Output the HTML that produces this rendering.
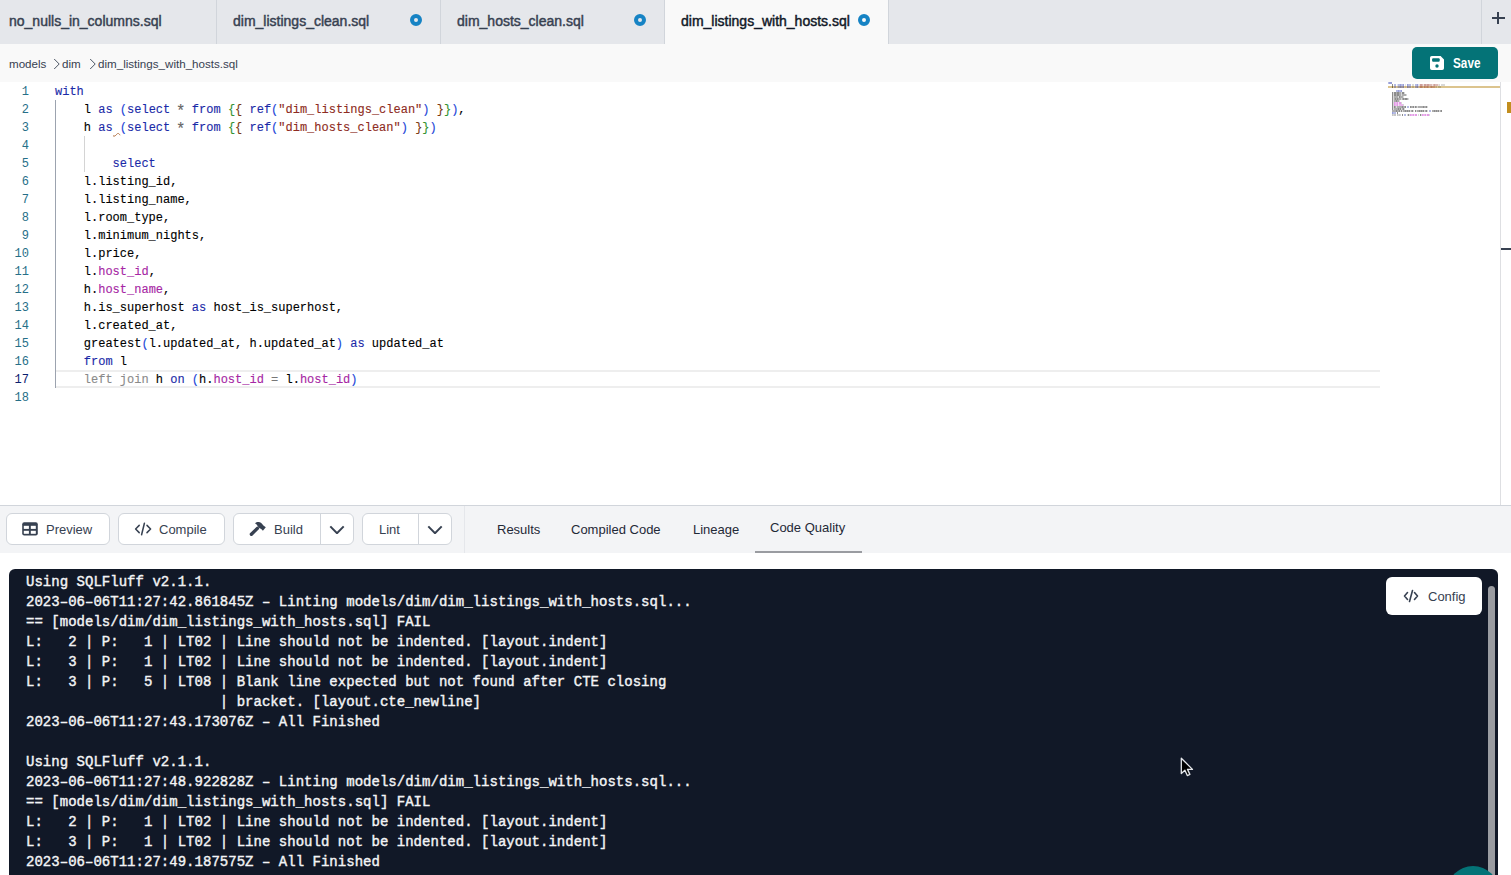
<!DOCTYPE html>
<html><head><meta charset="utf-8">
<style>
*{box-sizing:border-box;margin:0;padding:0}
html,body{width:1511px;height:875px;overflow:hidden;background:#fff;font-family:"Liberation Sans",sans-serif;color:#374151}
.abs{position:absolute}
#tabs{position:absolute;left:0;top:0;width:1511px;height:44px;background:#e5e7eb}
.tab{position:absolute;top:0;height:44px;border-right:1px solid #d1d5db}
.tab .t{position:absolute;top:13px;font-size:14px;line-height:16px;white-space:nowrap;color:#374151;-webkit-text-stroke:0.45px currentColor}
.dot{position:absolute;top:14px;width:12px;height:12px;border-radius:50%;border:4px solid #1683c4;background:#e5e7eb}
#crumb{position:absolute;left:0;top:44px;width:1511px;height:38px;background:#f9f9f9}
#crumb span{position:absolute;top:13px;font-size:11.6px;line-height:14px;color:#374151;white-space:nowrap}
#save{position:absolute;left:1412px;top:3px;width:86px;height:32px;background:#047377;border-radius:5px;color:#fff}
#editor{position:absolute;left:0;top:82px;width:1511px;height:423px;background:#fff}
.ln{position:absolute;left:0;width:29px;padding-top:1px;text-align:right;font-family:"Liberation Mono",monospace;font-size:12px;line-height:18px;height:18px;color:#266f88}
.cl{position:absolute;left:55px;padding-top:1px;font-family:"Liberation Mono",monospace;font-size:12px;line-height:18px;height:18px;white-space:pre;color:#000;-webkit-text-stroke:0.12px currentColor}
.k{color:#1a2aa8}
.s{color:#8e2b22}
.p{color:#a626a4}
.b1{color:#2246d8}
.b2{color:#319331}
.b3{color:#7b3814}
.op{color:#777}
.ast{display:inline-block;transform:translateY(2.5px) scale(1.3);color:#666}
.g{color:#8a8a8a}
.ln.cur{color:#0b216f}
#toolbar{position:absolute;left:0;top:505px;width:1511px;height:48px;background:#f3f4f6}
.bt{position:absolute;top:17px;font-size:13px;line-height:15px;color:#374151;white-space:nowrap}
.btn{position:absolute;top:8px;height:32px;background:#fff;border:1px solid #d1d5db;border-radius:6px}
.btn .t{position:absolute;top:8px;font-size:14px;line-height:16px;color:#374151;white-space:nowrap}
.rtab{position:absolute;top:17px;font-size:13px;line-height:15px;color:#1f2937;white-space:nowrap}
#console{position:absolute;left:9px;top:569px;width:1489px;height:320px;background:#111827;border-radius:6px}
.cons{position:absolute;left:17px;letter-spacing:0.025px;font-family:"Liberation Mono",monospace;font-weight:normal;-webkit-text-stroke:0.4px currentColor;font-size:14px;line-height:20px;white-space:pre;color:#f3f4f6}
#config{position:absolute;left:1377px;top:8px;width:96px;height:38px;background:#fff;border-radius:6px}
</style></head>
<body>
<div id="tabs">
  <div class="tab" style="left:0;width:217px"><span class="t" style="left:9px">no_nulls_in_columns.sql</span></div>
  <div class="tab" style="left:217px;width:224px"><span class="t" style="left:16px">dim_listings_clean.sql</span><div class="dot" style="left:193px"></div></div>
  <div class="tab" style="left:441px;width:224px"><span class="t" style="left:16px">dim_hosts_clean.sql</span><div class="dot" style="left:193px"></div></div>
  <div class="tab" style="left:665px;width:224px;background:#f9f9f9"><span class="t" style="left:16px;color:#111827">dim_listings_with_hosts.sql</span><div class="dot" style="left:193px;background:#f9f9f9"></div></div>
  <div class="abs" style="left:1481px;top:0;width:1px;height:44px;background:#d1d5db"></div>
  <div class="abs" style="left:1492px;top:17px;width:13px;height:2px;background:#374151"></div>
  <div class="abs" style="left:1497px;top:12px;width:2px;height:12px;background:#374151"></div>
</div>
<div id="crumb">
  <span style="left:9px">models</span>
  <svg class="abs" style="left:53px;top:14px" width="8" height="12" viewBox="0 0 8 12"><path d="M1.2 1L6.2 6 1.2 11" fill="none" stroke="#4b5563" stroke-width="1"/></svg>
  <span style="left:62px">dim</span>
  <svg class="abs" style="left:89px;top:14px" width="8" height="12" viewBox="0 0 8 12"><path d="M1.2 1L6.2 6 1.2 11" fill="none" stroke="#4b5563" stroke-width="1"/></svg>
  <span style="left:98px">dim_listings_with_hosts.sql</span>
  <div id="save">
    <svg class="abs" style="left:18px;top:9px" width="14" height="14" viewBox="0 0 14 14"><path d="M1.8 0H10.6L14 3.4V12.2A1.8 1.8 0 0 1 12.2 14H1.8A1.8 1.8 0 0 1 0 12.2V1.8A1.8 1.8 0 0 1 1.8 0Z" fill="#fff"/><rect x="2.1" y="2.3" width="7.6" height="3.5" rx="1" fill="#047377"/><circle cx="7" cy="10" r="1.7" fill="#047377"/></svg>
    <span class="abs" style="left:41px;top:8px;font-size:14px;line-height:16px;font-weight:bold;color:#fff;transform:scaleX(0.84);transform-origin:0 0">Save</span>
  </div>
</div>
<div id="editor">
<svg class="abs" style="left:1388px;top:0px" width="112" height="40" viewBox="0 0 112 40" shape-rendering="crispEdges"><rect x="0" y="4" width="112" height="2" fill="#dcc48e"/><rect x="0" y="0" width="1" height="2" fill="#1a2aa8" fill-opacity="0.32"/><rect x="1" y="0" width="1" height="2" fill="#1a2aa8" fill-opacity="0.45"/><rect x="2" y="0" width="1" height="2" fill="#1a2aa8" fill-opacity="0.45"/><rect x="3" y="0" width="1" height="2" fill="#1a2aa8" fill-opacity="0.45"/><rect x="4" y="2" width="1" height="2" fill="#000" fill-opacity="0.45"/><rect x="6" y="2" width="1" height="2" fill="#1a2aa8" fill-opacity="0.32"/><rect x="7" y="2" width="1" height="2" fill="#1a2aa8" fill-opacity="0.32"/><rect x="9" y="2" width="1" height="2" fill="#2246d8" fill-opacity="0.15"/><rect x="10" y="2" width="1" height="2" fill="#1a2aa8" fill-opacity="0.32"/><rect x="11" y="2" width="1" height="2" fill="#1a2aa8" fill-opacity="0.32"/><rect x="12" y="2" width="1" height="2" fill="#1a2aa8" fill-opacity="0.45"/><rect x="13" y="2" width="1" height="2" fill="#1a2aa8" fill-opacity="0.32"/><rect x="14" y="2" width="1" height="2" fill="#1a2aa8" fill-opacity="0.32"/><rect x="15" y="2" width="1" height="2" fill="#1a2aa8" fill-opacity="0.45"/><rect x="17" y="2" width="1" height="2" fill="#555" fill-opacity="0.15"/><rect x="19" y="2" width="1" height="2" fill="#1a2aa8" fill-opacity="0.45"/><rect x="20" y="2" width="1" height="2" fill="#1a2aa8" fill-opacity="0.32"/><rect x="21" y="2" width="1" height="2" fill="#1a2aa8" fill-opacity="0.32"/><rect x="22" y="2" width="1" height="2" fill="#1a2aa8" fill-opacity="0.32"/><rect x="24" y="2" width="1" height="2" fill="#000" fill-opacity="0.15"/><rect x="25" y="2" width="1" height="2" fill="#000" fill-opacity="0.15"/><rect x="27" y="2" width="1" height="2" fill="#1a2aa8" fill-opacity="0.32"/><rect x="28" y="2" width="1" height="2" fill="#1a2aa8" fill-opacity="0.32"/><rect x="29" y="2" width="1" height="2" fill="#1a2aa8" fill-opacity="0.45"/><rect x="30" y="2" width="1" height="2" fill="#2246d8" fill-opacity="0.15"/><rect x="31" y="2" width="1" height="2" fill="#8e2b22" fill-opacity="0.15"/><rect x="32" y="2" width="1" height="2" fill="#8e2b22" fill-opacity="0.45"/><rect x="33" y="2" width="1" height="2" fill="#8e2b22" fill-opacity="0.45"/><rect x="34" y="2" width="1" height="2" fill="#8e2b22" fill-opacity="0.32"/><rect x="35" y="2" width="1" height="2" fill="#8e2b22" fill-opacity="0.15"/><rect x="36" y="2" width="1" height="2" fill="#8e2b22" fill-opacity="0.45"/><rect x="37" y="2" width="1" height="2" fill="#8e2b22" fill-opacity="0.45"/><rect x="38" y="2" width="1" height="2" fill="#8e2b22" fill-opacity="0.32"/><rect x="39" y="2" width="1" height="2" fill="#8e2b22" fill-opacity="0.45"/><rect x="40" y="2" width="1" height="2" fill="#8e2b22" fill-opacity="0.45"/><rect x="41" y="2" width="1" height="2" fill="#8e2b22" fill-opacity="0.32"/><rect x="42" y="2" width="1" height="2" fill="#8e2b22" fill-opacity="0.32"/><rect x="43" y="2" width="1" height="2" fill="#8e2b22" fill-opacity="0.32"/><rect x="44" y="2" width="1" height="2" fill="#8e2b22" fill-opacity="0.15"/><rect x="45" y="2" width="1" height="2" fill="#8e2b22" fill-opacity="0.32"/><rect x="46" y="2" width="1" height="2" fill="#8e2b22" fill-opacity="0.45"/><rect x="47" y="2" width="1" height="2" fill="#8e2b22" fill-opacity="0.32"/><rect x="48" y="2" width="1" height="2" fill="#8e2b22" fill-opacity="0.32"/><rect x="49" y="2" width="1" height="2" fill="#8e2b22" fill-opacity="0.32"/><rect x="50" y="2" width="1" height="2" fill="#8e2b22" fill-opacity="0.15"/><rect x="51" y="2" width="1" height="2" fill="#000" fill-opacity="0.15"/><rect x="53" y="2" width="1" height="2" fill="#000" fill-opacity="0.15"/><rect x="54" y="2" width="1" height="2" fill="#000" fill-opacity="0.15"/><rect x="55" y="2" width="1" height="2" fill="#000" fill-opacity="0.15"/><rect x="56" y="2" width="1" height="2" fill="#000" fill-opacity="0.15"/><rect x="4" y="4" width="1" height="2" fill="#000" fill-opacity="0.45"/><rect x="6" y="4" width="1" height="2" fill="#1a2aa8" fill-opacity="0.32"/><rect x="7" y="4" width="1" height="2" fill="#1a2aa8" fill-opacity="0.32"/><rect x="9" y="4" width="1" height="2" fill="#2246d8" fill-opacity="0.15"/><rect x="10" y="4" width="1" height="2" fill="#1a2aa8" fill-opacity="0.32"/><rect x="11" y="4" width="1" height="2" fill="#1a2aa8" fill-opacity="0.32"/><rect x="12" y="4" width="1" height="2" fill="#1a2aa8" fill-opacity="0.45"/><rect x="13" y="4" width="1" height="2" fill="#1a2aa8" fill-opacity="0.32"/><rect x="14" y="4" width="1" height="2" fill="#1a2aa8" fill-opacity="0.32"/><rect x="15" y="4" width="1" height="2" fill="#1a2aa8" fill-opacity="0.45"/><rect x="17" y="4" width="1" height="2" fill="#555" fill-opacity="0.15"/><rect x="19" y="4" width="1" height="2" fill="#1a2aa8" fill-opacity="0.45"/><rect x="20" y="4" width="1" height="2" fill="#1a2aa8" fill-opacity="0.32"/><rect x="21" y="4" width="1" height="2" fill="#1a2aa8" fill-opacity="0.32"/><rect x="22" y="4" width="1" height="2" fill="#1a2aa8" fill-opacity="0.32"/><rect x="24" y="4" width="1" height="2" fill="#000" fill-opacity="0.15"/><rect x="25" y="4" width="1" height="2" fill="#000" fill-opacity="0.15"/><rect x="27" y="4" width="1" height="2" fill="#1a2aa8" fill-opacity="0.32"/><rect x="28" y="4" width="1" height="2" fill="#1a2aa8" fill-opacity="0.32"/><rect x="29" y="4" width="1" height="2" fill="#1a2aa8" fill-opacity="0.45"/><rect x="30" y="4" width="1" height="2" fill="#2246d8" fill-opacity="0.15"/><rect x="31" y="4" width="1" height="2" fill="#8e2b22" fill-opacity="0.15"/><rect x="32" y="4" width="1" height="2" fill="#8e2b22" fill-opacity="0.45"/><rect x="33" y="4" width="1" height="2" fill="#8e2b22" fill-opacity="0.45"/><rect x="34" y="4" width="1" height="2" fill="#8e2b22" fill-opacity="0.32"/><rect x="35" y="4" width="1" height="2" fill="#8e2b22" fill-opacity="0.15"/><rect x="36" y="4" width="1" height="2" fill="#8e2b22" fill-opacity="0.45"/><rect x="37" y="4" width="1" height="2" fill="#8e2b22" fill-opacity="0.32"/><rect x="38" y="4" width="1" height="2" fill="#8e2b22" fill-opacity="0.32"/><rect x="39" y="4" width="1" height="2" fill="#8e2b22" fill-opacity="0.45"/><rect x="40" y="4" width="1" height="2" fill="#8e2b22" fill-opacity="0.32"/><rect x="41" y="4" width="1" height="2" fill="#8e2b22" fill-opacity="0.15"/><rect x="42" y="4" width="1" height="2" fill="#8e2b22" fill-opacity="0.32"/><rect x="43" y="4" width="1" height="2" fill="#8e2b22" fill-opacity="0.45"/><rect x="44" y="4" width="1" height="2" fill="#8e2b22" fill-opacity="0.32"/><rect x="45" y="4" width="1" height="2" fill="#8e2b22" fill-opacity="0.32"/><rect x="46" y="4" width="1" height="2" fill="#8e2b22" fill-opacity="0.32"/><rect x="47" y="4" width="1" height="2" fill="#8e2b22" fill-opacity="0.15"/><rect x="48" y="4" width="1" height="2" fill="#000" fill-opacity="0.15"/><rect x="50" y="4" width="1" height="2" fill="#000" fill-opacity="0.15"/><rect x="51" y="4" width="1" height="2" fill="#000" fill-opacity="0.15"/><rect x="52" y="4" width="1" height="2" fill="#000" fill-opacity="0.15"/><rect x="8" y="8" width="1" height="2" fill="#1a2aa8" fill-opacity="0.32"/><rect x="9" y="8" width="1" height="2" fill="#1a2aa8" fill-opacity="0.32"/><rect x="10" y="8" width="1" height="2" fill="#1a2aa8" fill-opacity="0.45"/><rect x="11" y="8" width="1" height="2" fill="#1a2aa8" fill-opacity="0.32"/><rect x="12" y="8" width="1" height="2" fill="#1a2aa8" fill-opacity="0.32"/><rect x="13" y="8" width="1" height="2" fill="#1a2aa8" fill-opacity="0.45"/><rect x="4" y="10" width="1" height="2" fill="#000" fill-opacity="0.45"/><rect x="5" y="10" width="1" height="2" fill="#000" fill-opacity="0.15"/><rect x="6" y="10" width="1" height="2" fill="#000" fill-opacity="0.45"/><rect x="7" y="10" width="1" height="2" fill="#000" fill-opacity="0.45"/><rect x="8" y="10" width="1" height="2" fill="#000" fill-opacity="0.32"/><rect x="9" y="10" width="1" height="2" fill="#000" fill-opacity="0.45"/><rect x="10" y="10" width="1" height="2" fill="#000" fill-opacity="0.45"/><rect x="11" y="10" width="1" height="2" fill="#000" fill-opacity="0.32"/><rect x="12" y="10" width="1" height="2" fill="#000" fill-opacity="0.32"/><rect x="13" y="10" width="1" height="2" fill="#000" fill-opacity="0.15"/><rect x="14" y="10" width="1" height="2" fill="#000" fill-opacity="0.45"/><rect x="15" y="10" width="1" height="2" fill="#000" fill-opacity="0.45"/><rect x="16" y="10" width="1" height="2" fill="#000" fill-opacity="0.15"/><rect x="4" y="12" width="1" height="2" fill="#000" fill-opacity="0.45"/><rect x="5" y="12" width="1" height="2" fill="#000" fill-opacity="0.15"/><rect x="6" y="12" width="1" height="2" fill="#000" fill-opacity="0.45"/><rect x="7" y="12" width="1" height="2" fill="#000" fill-opacity="0.45"/><rect x="8" y="12" width="1" height="2" fill="#000" fill-opacity="0.32"/><rect x="9" y="12" width="1" height="2" fill="#000" fill-opacity="0.45"/><rect x="10" y="12" width="1" height="2" fill="#000" fill-opacity="0.45"/><rect x="11" y="12" width="1" height="2" fill="#000" fill-opacity="0.32"/><rect x="12" y="12" width="1" height="2" fill="#000" fill-opacity="0.32"/><rect x="13" y="12" width="1" height="2" fill="#000" fill-opacity="0.15"/><rect x="14" y="12" width="1" height="2" fill="#000" fill-opacity="0.32"/><rect x="15" y="12" width="1" height="2" fill="#000" fill-opacity="0.32"/><rect x="16" y="12" width="1" height="2" fill="#000" fill-opacity="0.32"/><rect x="17" y="12" width="1" height="2" fill="#000" fill-opacity="0.32"/><rect x="18" y="12" width="1" height="2" fill="#000" fill-opacity="0.15"/><rect x="4" y="14" width="1" height="2" fill="#000" fill-opacity="0.45"/><rect x="5" y="14" width="1" height="2" fill="#000" fill-opacity="0.15"/><rect x="6" y="14" width="1" height="2" fill="#000" fill-opacity="0.32"/><rect x="7" y="14" width="1" height="2" fill="#000" fill-opacity="0.32"/><rect x="8" y="14" width="1" height="2" fill="#000" fill-opacity="0.32"/><rect x="9" y="14" width="1" height="2" fill="#000" fill-opacity="0.32"/><rect x="10" y="14" width="1" height="2" fill="#000" fill-opacity="0.15"/><rect x="11" y="14" width="1" height="2" fill="#000" fill-opacity="0.45"/><rect x="12" y="14" width="1" height="2" fill="#000" fill-opacity="0.32"/><rect x="13" y="14" width="1" height="2" fill="#000" fill-opacity="0.32"/><rect x="14" y="14" width="1" height="2" fill="#000" fill-opacity="0.32"/><rect x="15" y="14" width="1" height="2" fill="#000" fill-opacity="0.15"/><rect x="4" y="16" width="1" height="2" fill="#000" fill-opacity="0.45"/><rect x="5" y="16" width="1" height="2" fill="#000" fill-opacity="0.15"/><rect x="6" y="16" width="1" height="2" fill="#000" fill-opacity="0.32"/><rect x="7" y="16" width="1" height="2" fill="#000" fill-opacity="0.45"/><rect x="8" y="16" width="1" height="2" fill="#000" fill-opacity="0.32"/><rect x="9" y="16" width="1" height="2" fill="#000" fill-opacity="0.45"/><rect x="10" y="16" width="1" height="2" fill="#000" fill-opacity="0.32"/><rect x="11" y="16" width="1" height="2" fill="#000" fill-opacity="0.32"/><rect x="12" y="16" width="1" height="2" fill="#000" fill-opacity="0.32"/><rect x="13" y="16" width="1" height="2" fill="#000" fill-opacity="0.15"/><rect x="14" y="16" width="1" height="2" fill="#000" fill-opacity="0.32"/><rect x="15" y="16" width="1" height="2" fill="#000" fill-opacity="0.45"/><rect x="16" y="16" width="1" height="2" fill="#000" fill-opacity="0.32"/><rect x="17" y="16" width="1" height="2" fill="#000" fill-opacity="0.45"/><rect x="18" y="16" width="1" height="2" fill="#000" fill-opacity="0.45"/><rect x="19" y="16" width="1" height="2" fill="#000" fill-opacity="0.32"/><rect x="20" y="16" width="1" height="2" fill="#000" fill-opacity="0.15"/><rect x="4" y="18" width="1" height="2" fill="#000" fill-opacity="0.45"/><rect x="5" y="18" width="1" height="2" fill="#000" fill-opacity="0.15"/><rect x="6" y="18" width="1" height="2" fill="#000" fill-opacity="0.32"/><rect x="7" y="18" width="1" height="2" fill="#000" fill-opacity="0.32"/><rect x="8" y="18" width="1" height="2" fill="#000" fill-opacity="0.45"/><rect x="9" y="18" width="1" height="2" fill="#000" fill-opacity="0.32"/><rect x="10" y="18" width="1" height="2" fill="#000" fill-opacity="0.32"/><rect x="11" y="18" width="1" height="2" fill="#000" fill-opacity="0.15"/><rect x="4" y="20" width="1" height="2" fill="#000" fill-opacity="0.45"/><rect x="5" y="20" width="1" height="2" fill="#000" fill-opacity="0.15"/><rect x="6" y="20" width="1" height="2" fill="#c020c8" fill-opacity="0.45"/><rect x="7" y="20" width="1" height="2" fill="#c020c8" fill-opacity="0.32"/><rect x="8" y="20" width="1" height="2" fill="#c020c8" fill-opacity="0.32"/><rect x="9" y="20" width="1" height="2" fill="#c020c8" fill-opacity="0.45"/><rect x="10" y="20" width="1" height="2" fill="#c020c8" fill-opacity="0.15"/><rect x="11" y="20" width="1" height="2" fill="#c020c8" fill-opacity="0.45"/><rect x="12" y="20" width="1" height="2" fill="#c020c8" fill-opacity="0.45"/><rect x="13" y="20" width="1" height="2" fill="#000" fill-opacity="0.15"/><rect x="4" y="22" width="1" height="2" fill="#000" fill-opacity="0.45"/><rect x="5" y="22" width="1" height="2" fill="#000" fill-opacity="0.15"/><rect x="6" y="22" width="1" height="2" fill="#c020c8" fill-opacity="0.45"/><rect x="7" y="22" width="1" height="2" fill="#c020c8" fill-opacity="0.32"/><rect x="8" y="22" width="1" height="2" fill="#c020c8" fill-opacity="0.32"/><rect x="9" y="22" width="1" height="2" fill="#c020c8" fill-opacity="0.45"/><rect x="10" y="22" width="1" height="2" fill="#c020c8" fill-opacity="0.15"/><rect x="11" y="22" width="1" height="2" fill="#c020c8" fill-opacity="0.32"/><rect x="12" y="22" width="1" height="2" fill="#c020c8" fill-opacity="0.32"/><rect x="13" y="22" width="1" height="2" fill="#c020c8" fill-opacity="0.32"/><rect x="14" y="22" width="1" height="2" fill="#c020c8" fill-opacity="0.32"/><rect x="15" y="22" width="1" height="2" fill="#000" fill-opacity="0.15"/><rect x="4" y="24" width="1" height="2" fill="#000" fill-opacity="0.45"/><rect x="5" y="24" width="1" height="2" fill="#000" fill-opacity="0.15"/><rect x="6" y="24" width="1" height="2" fill="#000" fill-opacity="0.45"/><rect x="7" y="24" width="1" height="2" fill="#000" fill-opacity="0.32"/><rect x="8" y="24" width="1" height="2" fill="#000" fill-opacity="0.15"/><rect x="9" y="24" width="1" height="2" fill="#000" fill-opacity="0.32"/><rect x="10" y="24" width="1" height="2" fill="#000" fill-opacity="0.32"/><rect x="11" y="24" width="1" height="2" fill="#000" fill-opacity="0.32"/><rect x="12" y="24" width="1" height="2" fill="#000" fill-opacity="0.32"/><rect x="13" y="24" width="1" height="2" fill="#000" fill-opacity="0.32"/><rect x="14" y="24" width="1" height="2" fill="#000" fill-opacity="0.45"/><rect x="15" y="24" width="1" height="2" fill="#000" fill-opacity="0.32"/><rect x="16" y="24" width="1" height="2" fill="#000" fill-opacity="0.32"/><rect x="17" y="24" width="1" height="2" fill="#000" fill-opacity="0.45"/><rect x="19" y="24" width="1" height="2" fill="#1a2aa8" fill-opacity="0.32"/><rect x="20" y="24" width="1" height="2" fill="#1a2aa8" fill-opacity="0.32"/><rect x="22" y="24" width="1" height="2" fill="#000" fill-opacity="0.45"/><rect x="23" y="24" width="1" height="2" fill="#000" fill-opacity="0.32"/><rect x="24" y="24" width="1" height="2" fill="#000" fill-opacity="0.32"/><rect x="25" y="24" width="1" height="2" fill="#000" fill-opacity="0.45"/><rect x="26" y="24" width="1" height="2" fill="#000" fill-opacity="0.15"/><rect x="27" y="24" width="1" height="2" fill="#000" fill-opacity="0.45"/><rect x="28" y="24" width="1" height="2" fill="#000" fill-opacity="0.32"/><rect x="29" y="24" width="1" height="2" fill="#000" fill-opacity="0.15"/><rect x="30" y="24" width="1" height="2" fill="#000" fill-opacity="0.32"/><rect x="31" y="24" width="1" height="2" fill="#000" fill-opacity="0.32"/><rect x="32" y="24" width="1" height="2" fill="#000" fill-opacity="0.32"/><rect x="33" y="24" width="1" height="2" fill="#000" fill-opacity="0.32"/><rect x="34" y="24" width="1" height="2" fill="#000" fill-opacity="0.32"/><rect x="35" y="24" width="1" height="2" fill="#000" fill-opacity="0.45"/><rect x="36" y="24" width="1" height="2" fill="#000" fill-opacity="0.32"/><rect x="37" y="24" width="1" height="2" fill="#000" fill-opacity="0.32"/><rect x="38" y="24" width="1" height="2" fill="#000" fill-opacity="0.45"/><rect x="39" y="24" width="1" height="2" fill="#000" fill-opacity="0.15"/><rect x="4" y="26" width="1" height="2" fill="#000" fill-opacity="0.45"/><rect x="5" y="26" width="1" height="2" fill="#000" fill-opacity="0.15"/><rect x="6" y="26" width="1" height="2" fill="#000" fill-opacity="0.32"/><rect x="7" y="26" width="1" height="2" fill="#000" fill-opacity="0.32"/><rect x="8" y="26" width="1" height="2" fill="#000" fill-opacity="0.32"/><rect x="9" y="26" width="1" height="2" fill="#000" fill-opacity="0.32"/><rect x="10" y="26" width="1" height="2" fill="#000" fill-opacity="0.45"/><rect x="11" y="26" width="1" height="2" fill="#000" fill-opacity="0.32"/><rect x="12" y="26" width="1" height="2" fill="#000" fill-opacity="0.45"/><rect x="13" y="26" width="1" height="2" fill="#000" fill-opacity="0.15"/><rect x="14" y="26" width="1" height="2" fill="#000" fill-opacity="0.32"/><rect x="15" y="26" width="1" height="2" fill="#000" fill-opacity="0.45"/><rect x="16" y="26" width="1" height="2" fill="#000" fill-opacity="0.15"/><rect x="4" y="28" width="1" height="2" fill="#000" fill-opacity="0.32"/><rect x="5" y="28" width="1" height="2" fill="#000" fill-opacity="0.32"/><rect x="6" y="28" width="1" height="2" fill="#000" fill-opacity="0.32"/><rect x="7" y="28" width="1" height="2" fill="#000" fill-opacity="0.32"/><rect x="8" y="28" width="1" height="2" fill="#000" fill-opacity="0.45"/><rect x="9" y="28" width="1" height="2" fill="#000" fill-opacity="0.32"/><rect x="10" y="28" width="1" height="2" fill="#000" fill-opacity="0.32"/><rect x="11" y="28" width="1" height="2" fill="#000" fill-opacity="0.45"/><rect x="12" y="28" width="1" height="2" fill="#000" fill-opacity="0.15"/><rect x="13" y="28" width="1" height="2" fill="#000" fill-opacity="0.45"/><rect x="14" y="28" width="1" height="2" fill="#000" fill-opacity="0.15"/><rect x="15" y="28" width="1" height="2" fill="#000" fill-opacity="0.32"/><rect x="16" y="28" width="1" height="2" fill="#000" fill-opacity="0.32"/><rect x="17" y="28" width="1" height="2" fill="#000" fill-opacity="0.45"/><rect x="18" y="28" width="1" height="2" fill="#000" fill-opacity="0.32"/><rect x="19" y="28" width="1" height="2" fill="#000" fill-opacity="0.45"/><rect x="20" y="28" width="1" height="2" fill="#000" fill-opacity="0.32"/><rect x="21" y="28" width="1" height="2" fill="#000" fill-opacity="0.45"/><rect x="22" y="28" width="1" height="2" fill="#000" fill-opacity="0.15"/><rect x="23" y="28" width="1" height="2" fill="#000" fill-opacity="0.32"/><rect x="24" y="28" width="1" height="2" fill="#000" fill-opacity="0.45"/><rect x="25" y="28" width="1" height="2" fill="#000" fill-opacity="0.15"/><rect x="27" y="28" width="1" height="2" fill="#000" fill-opacity="0.45"/><rect x="28" y="28" width="1" height="2" fill="#000" fill-opacity="0.15"/><rect x="29" y="28" width="1" height="2" fill="#000" fill-opacity="0.32"/><rect x="30" y="28" width="1" height="2" fill="#000" fill-opacity="0.32"/><rect x="31" y="28" width="1" height="2" fill="#000" fill-opacity="0.45"/><rect x="32" y="28" width="1" height="2" fill="#000" fill-opacity="0.32"/><rect x="33" y="28" width="1" height="2" fill="#000" fill-opacity="0.45"/><rect x="34" y="28" width="1" height="2" fill="#000" fill-opacity="0.32"/><rect x="35" y="28" width="1" height="2" fill="#000" fill-opacity="0.45"/><rect x="36" y="28" width="1" height="2" fill="#000" fill-opacity="0.15"/><rect x="37" y="28" width="1" height="2" fill="#000" fill-opacity="0.32"/><rect x="38" y="28" width="1" height="2" fill="#000" fill-opacity="0.45"/><rect x="39" y="28" width="1" height="2" fill="#000" fill-opacity="0.15"/><rect x="41" y="28" width="1" height="2" fill="#1a2aa8" fill-opacity="0.32"/><rect x="42" y="28" width="1" height="2" fill="#1a2aa8" fill-opacity="0.32"/><rect x="44" y="28" width="1" height="2" fill="#000" fill-opacity="0.32"/><rect x="45" y="28" width="1" height="2" fill="#000" fill-opacity="0.32"/><rect x="46" y="28" width="1" height="2" fill="#000" fill-opacity="0.45"/><rect x="47" y="28" width="1" height="2" fill="#000" fill-opacity="0.32"/><rect x="48" y="28" width="1" height="2" fill="#000" fill-opacity="0.45"/><rect x="49" y="28" width="1" height="2" fill="#000" fill-opacity="0.32"/><rect x="50" y="28" width="1" height="2" fill="#000" fill-opacity="0.45"/><rect x="51" y="28" width="1" height="2" fill="#000" fill-opacity="0.15"/><rect x="52" y="28" width="1" height="2" fill="#000" fill-opacity="0.32"/><rect x="53" y="28" width="1" height="2" fill="#000" fill-opacity="0.45"/><rect x="4" y="30" width="1" height="2" fill="#1a2aa8" fill-opacity="0.45"/><rect x="5" y="30" width="1" height="2" fill="#1a2aa8" fill-opacity="0.32"/><rect x="6" y="30" width="1" height="2" fill="#1a2aa8" fill-opacity="0.32"/><rect x="7" y="30" width="1" height="2" fill="#1a2aa8" fill-opacity="0.32"/><rect x="9" y="30" width="1" height="2" fill="#000" fill-opacity="0.45"/><rect x="4" y="32" width="1" height="2" fill="#808080" fill-opacity="0.45"/><rect x="5" y="32" width="1" height="2" fill="#808080" fill-opacity="0.32"/><rect x="6" y="32" width="1" height="2" fill="#808080" fill-opacity="0.45"/><rect x="7" y="32" width="1" height="2" fill="#808080" fill-opacity="0.45"/><rect x="9" y="32" width="1" height="2" fill="#808080" fill-opacity="0.45"/><rect x="10" y="32" width="1" height="2" fill="#808080" fill-opacity="0.32"/><rect x="11" y="32" width="1" height="2" fill="#808080" fill-opacity="0.45"/><rect x="12" y="32" width="1" height="2" fill="#808080" fill-opacity="0.32"/><rect x="14" y="32" width="1" height="2" fill="#000" fill-opacity="0.45"/><rect x="16" y="32" width="1" height="2" fill="#1a2aa8" fill-opacity="0.32"/><rect x="17" y="32" width="1" height="2" fill="#1a2aa8" fill-opacity="0.32"/><rect x="19" y="32" width="1" height="2" fill="#000" fill-opacity="0.15"/><rect x="20" y="32" width="1" height="2" fill="#000" fill-opacity="0.45"/><rect x="21" y="32" width="1" height="2" fill="#000" fill-opacity="0.15"/><rect x="22" y="32" width="1" height="2" fill="#c020c8" fill-opacity="0.45"/><rect x="23" y="32" width="1" height="2" fill="#c020c8" fill-opacity="0.32"/><rect x="24" y="32" width="1" height="2" fill="#c020c8" fill-opacity="0.32"/><rect x="25" y="32" width="1" height="2" fill="#c020c8" fill-opacity="0.45"/><rect x="26" y="32" width="1" height="2" fill="#c020c8" fill-opacity="0.15"/><rect x="27" y="32" width="1" height="2" fill="#c020c8" fill-opacity="0.45"/><rect x="28" y="32" width="1" height="2" fill="#c020c8" fill-opacity="0.45"/><rect x="30" y="32" width="1" height="2" fill="#000" fill-opacity="0.15"/><rect x="32" y="32" width="1" height="2" fill="#000" fill-opacity="0.45"/><rect x="33" y="32" width="1" height="2" fill="#000" fill-opacity="0.15"/><rect x="34" y="32" width="1" height="2" fill="#c020c8" fill-opacity="0.45"/><rect x="35" y="32" width="1" height="2" fill="#c020c8" fill-opacity="0.32"/><rect x="36" y="32" width="1" height="2" fill="#c020c8" fill-opacity="0.32"/><rect x="37" y="32" width="1" height="2" fill="#c020c8" fill-opacity="0.45"/><rect x="38" y="32" width="1" height="2" fill="#c020c8" fill-opacity="0.15"/><rect x="39" y="32" width="1" height="2" fill="#c020c8" fill-opacity="0.45"/><rect x="40" y="32" width="1" height="2" fill="#c020c8" fill-opacity="0.45"/><rect x="41" y="32" width="1" height="2" fill="#000" fill-opacity="0.15"/></svg>

  <div class="abs" style="left:1500px;top:0;width:1px;height:423px;background:#dedfe2"></div>
  <div class="abs" style="left:1507px;top:20px;width:4px;height:11px;background:#c28e1e"></div>
  <div class="abs" style="left:1501px;top:166px;width:10px;height:2px;background:#374151"></div>
  <svg class="abs" style="left:112px;top:50px" width="9" height="5" viewBox="0 0 9 5"><path d="M1 3.8C2.5 4.6 3.5 3.8 4.5 2.5S6.8 0.8 8 3.2" fill="none" stroke="#b07040" stroke-width="1"/></svg>

  <div class="abs" style="left:56px;top:288px;width:1324px;height:18px;border-top:2px solid #eeeeee;border-bottom:2px solid #eeeeee"></div>
  <div class="abs" style="left:55px;top:18px;width:1px;height:288px;background:#9ca3af"></div>
  <div class="abs" style="left:84px;top:54px;width:1px;height:36px;background:#d4d4d4"></div>
<div class="ln" style="top:0px">1</div>
<div class="cl" style="top:0px"><span class="k">with</span></div>
<div class="ln" style="top:18px">2</div>
<div class="cl" style="top:18px">    l <span class="k">as</span> <span class="b1">(</span><span class="k">select</span> <span class="op ast">*</span> <span class="k">from</span> <span class="b2">{</span><span class="b3">{</span> <span class="k">ref</span><span class="b1">(</span><span class="s">"dim_listings_clean"</span><span class="b1">)</span> <span class="b3">}</span><span class="b2">}</span><span class="b1">)</span>,</div>
<div class="ln" style="top:36px">3</div>
<div class="cl" style="top:36px">    h <span class="k">as</span> <span class="b1">(</span><span class="k">select</span> <span class="op ast">*</span> <span class="k">from</span> <span class="b2">{</span><span class="b3">{</span> <span class="k">ref</span><span class="b1">(</span><span class="s">"dim_hosts_clean"</span><span class="b1">)</span> <span class="b3">}</span><span class="b2">}</span><span class="b1">)</span></div>
<div class="ln" style="top:54px">4</div>
<div class="cl" style="top:54px"></div>
<div class="ln" style="top:72px">5</div>
<div class="cl" style="top:72px">        <span class="k">select</span></div>
<div class="ln" style="top:90px">6</div>
<div class="cl" style="top:90px">    l.listing_id,</div>
<div class="ln" style="top:108px">7</div>
<div class="cl" style="top:108px">    l.listing_name,</div>
<div class="ln" style="top:126px">8</div>
<div class="cl" style="top:126px">    l.room_type,</div>
<div class="ln" style="top:144px">9</div>
<div class="cl" style="top:144px">    l.minimum_nights,</div>
<div class="ln" style="top:162px">10</div>
<div class="cl" style="top:162px">    l.price,</div>
<div class="ln" style="top:180px">11</div>
<div class="cl" style="top:180px">    l.<span class="p">host_id</span>,</div>
<div class="ln" style="top:198px">12</div>
<div class="cl" style="top:198px">    h.<span class="p">host_name</span>,</div>
<div class="ln" style="top:216px">13</div>
<div class="cl" style="top:216px">    h.is_superhost <span class="k">as</span> host_is_superhost,</div>
<div class="ln" style="top:234px">14</div>
<div class="cl" style="top:234px">    l.created_at,</div>
<div class="ln" style="top:252px">15</div>
<div class="cl" style="top:252px">    greatest<span class="b1">(</span>l.updated_at, h.updated_at<span class="b1">)</span> <span class="k">as</span> updated_at</div>
<div class="ln" style="top:270px">16</div>
<div class="cl" style="top:270px">    <span class="k">from</span> l</div>
<div class="ln cur" style="top:288px">17</div>
<div class="cl" style="top:288px">    <span class="g">left join</span> h <span class="k">on</span> <span class="b1">(</span>h.<span class="p">host_id</span> <span class="op">=</span> l.<span class="p">host_id</span><span class="b1">)</span></div>
<div class="ln" style="top:306px">18</div>
<div class="cl" style="top:306px"></div>

</div>
<div id="toolbar">
  <div class="abs" style="left:0;top:0;width:1511px;height:1px;background:#d1d5db"></div>
  <div class="btn" style="left:6px;top:8px;width:104px"></div>
  <svg class="abs" style="left:22px;top:17px" width="16" height="14" viewBox="0 0 16 14"><rect x="0.2" y="0.2" width="15.6" height="13.4" rx="2" fill="#374151"/><rect x="1.8" y="3.8" width="5.1" height="3.1" fill="#fff"/><rect x="8.8" y="3.8" width="5.0" height="3.1" fill="#fff"/><rect x="1.8" y="8.8" width="5.1" height="3.0" fill="#fff"/><rect x="8.8" y="8.8" width="5.0" height="3.0" fill="#fff"/></svg>
  <span class="bt" style="left:46px">Preview</span>
  <div class="btn" style="left:118px;top:8px;width:107px"></div>
  <svg class="abs" style="left:134px;top:17px" width="18" height="14" viewBox="0 0 18 14"><path d="M5.2 3.4L1.6 7l3.6 3.6M13 3.4L16.6 7 13 10.6M10.4 1.2L7.6 12.8" fill="none" stroke="#374151" stroke-width="1.5" stroke-linecap="round" stroke-linejoin="round"/></svg>
  <span class="bt" style="left:159px">Compile</span>
  <div class="btn" style="left:233px;top:8px;width:121px"></div>
  <div class="abs" style="left:320px;top:9px;width:1px;height:30px;background:#d1d5db"></div>
  <svg class="abs" style="left:249px;top:16px" width="18" height="16" viewBox="0 0 18 16"><path d="M2.4 13.2L8.4 7.4" stroke="#374151" stroke-width="3.4" stroke-linecap="round"/><path d="M6 2.2C7 1.2 8.5 0.9 9.6 1 11.5 1.2 13.2 2.4 14.4 4.6L16.8 6.2 13.9 9.7 12.8 8.4C11.8 7.6 10.8 7 10 6.7L8.8 5.2C8.2 4 7.2 3 6 2.2Z" fill="#374151"/></svg>
  <span class="bt" style="left:274px">Build</span>
  <svg class="abs" style="left:329px;top:20px" width="16" height="9" viewBox="0 0 16 9"><path d="M1.3 1.4L8 8.2 14.7 1.4" fill="none" stroke="#374151" stroke-width="2"/></svg>
  <div class="btn" style="left:362px;top:8px;width:90px"></div>
  <div class="abs" style="left:418px;top:9px;width:1px;height:30px;background:#d1d5db"></div>
  <span class="bt" style="left:379px">Lint</span>
  <svg class="abs" style="left:427px;top:20px" width="16" height="9" viewBox="0 0 16 9"><path d="M1.3 1.4L8 8.2 14.7 1.4" fill="none" stroke="#374151" stroke-width="2"/></svg>
  <div class="abs" style="left:464px;top:1px;width:1px;height:47px;background:#e5e7eb"></div>
  <span class="rtab" style="left:497px">Results</span>
  <span class="rtab" style="left:571px">Compiled Code</span>
  <span class="rtab" style="left:693px">Lineage</span>
  <span class="rtab" style="left:770px;top:15px">Code Quality</span>
  <div class="abs" style="left:755px;top:46px;width:107px;height:2px;background:#9a9ca1"></div>
</div>
<div id="console">
<div class="cons" style="top:3px">Using SQLFluff v2.1.1.</div>
<div class="cons" style="top:23px">2023–06–06T11:27:42.861845Z – Linting models/dim/dim_listings_with_hosts.sql...</div>
<div class="cons" style="top:43px">== [models/dim/dim_listings_with_hosts.sql] FAIL</div>
<div class="cons" style="top:63px">L:   2 | P:   1 | LT02 | Line should not be indented. [layout.indent]</div>
<div class="cons" style="top:83px">L:   3 | P:   1 | LT02 | Line should not be indented. [layout.indent]</div>
<div class="cons" style="top:103px">L:   3 | P:   5 | LT08 | Blank line expected but not found after CTE closing</div>
<div class="cons" style="top:123px">                       | bracket. [layout.cte_newline]</div>
<div class="cons" style="top:143px">2023–06–06T11:27:43.173076Z – All Finished</div>
<div class="cons" style="top:163px"></div>
<div class="cons" style="top:183px">Using SQLFluff v2.1.1.</div>
<div class="cons" style="top:203px">2023–06–06T11:27:48.922828Z – Linting models/dim/dim_listings_with_hosts.sql...</div>
<div class="cons" style="top:223px">== [models/dim/dim_listings_with_hosts.sql] FAIL</div>
<div class="cons" style="top:243px">L:   2 | P:   1 | LT02 | Line should not be indented. [layout.indent]</div>
<div class="cons" style="top:263px">L:   3 | P:   1 | LT02 | Line should not be indented. [layout.indent]</div>
<div class="cons" style="top:283px">2023–06–06T11:27:49.187575Z – All Finished</div>
<svg class="abs" style="left:1171px;top:188px" width="14" height="20" viewBox="0 0 14 20"><path d="M1.3 1.2V16.6L4.9 13.3 7.3 18.6 9.9 17.4 7.5 12.4H12.5Z" fill="#000" stroke="#e5e7eb" stroke-width="1.3" stroke-linejoin="round"/></svg>
<div id="config"><svg class="abs" style="left:17px;top:12px" width="16" height="14" viewBox="0 0 16 14"><path d="M4.5 3.5L1.5 7l3 3.5M11.5 3.5l3 3.5-3 3.5M9.5 1.5l-3 11" fill="none" stroke="#374151" stroke-width="1.6" stroke-linecap="round" stroke-linejoin="round"/></svg><span class="abs" style="left:42px;top:12px;font-size:13px;line-height:15px;color:#374151">Config</span></div>
<div class="abs" style="left:1479px;top:17px;width:7px;height:300px;border-radius:4px;background:#9a9ca1"></div>
<div class="abs" style="left:1438px;top:297px;width:52px;height:52px;border-radius:50%;background:#047377"></div>
</div>
</body></html>
